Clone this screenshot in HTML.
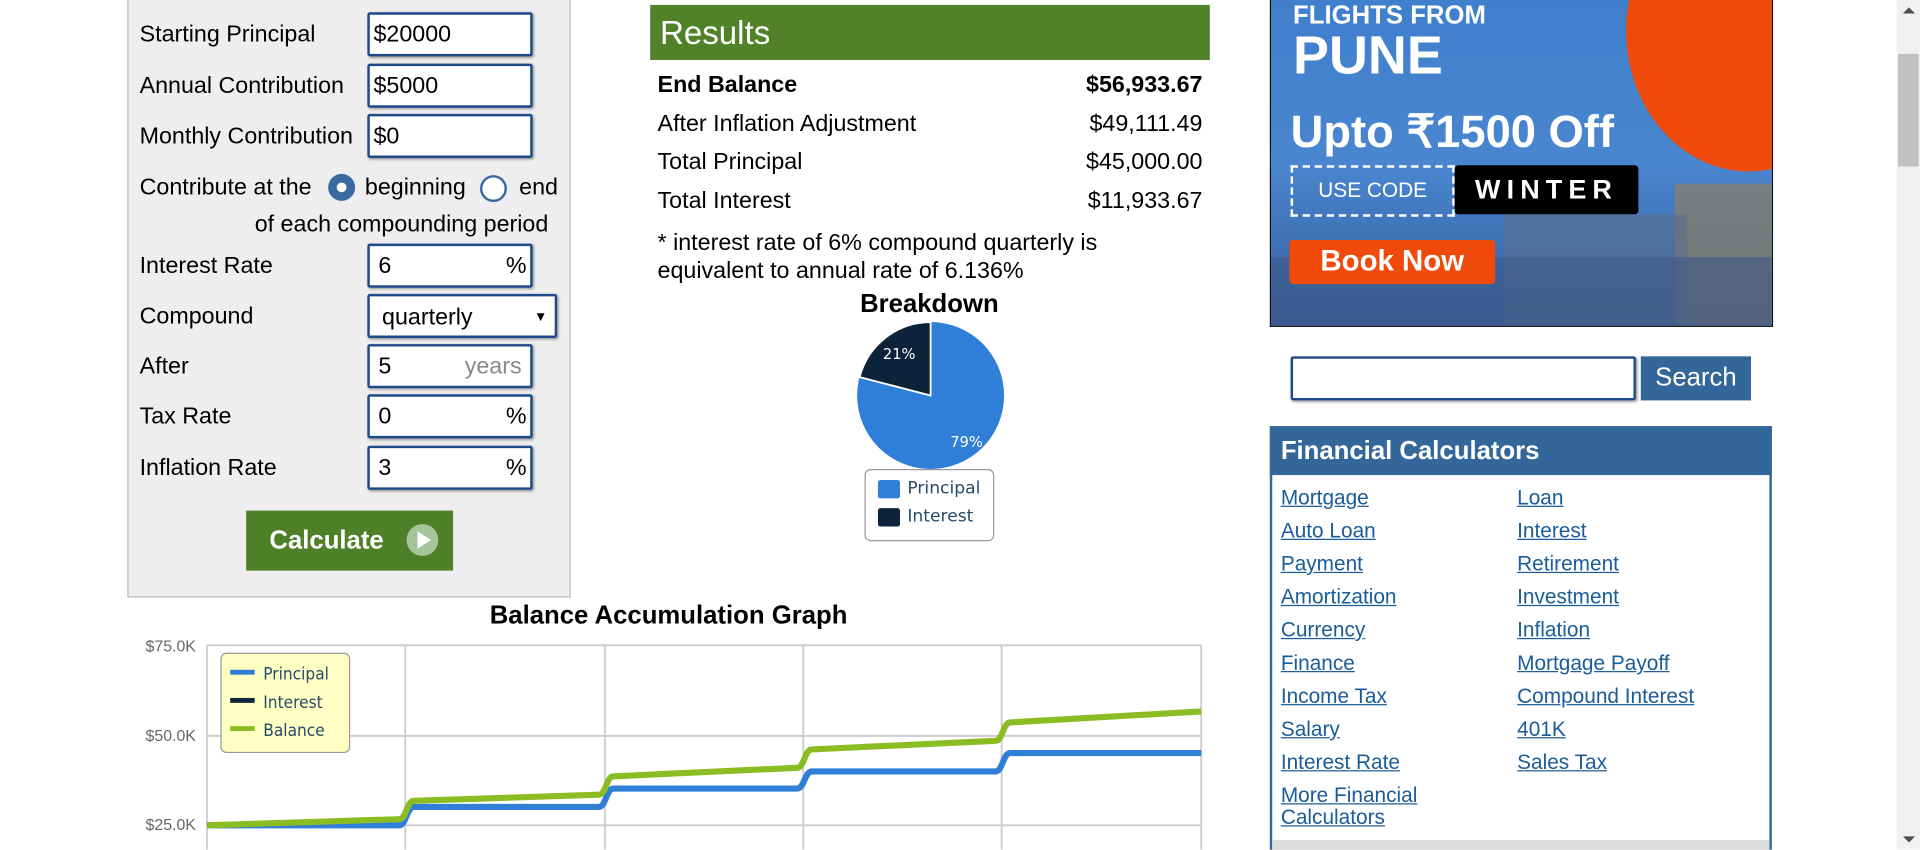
<!DOCTYPE html>
<html><head><meta charset="utf-8"><style>
html,body{margin:0;padding:0;width:1920px;height:849px;overflow:hidden;background:#fff}
#w{position:absolute;left:0;top:0;width:1568px;height:694px;overflow:hidden;transform:scale(1.22449);transform-origin:0 0;font-family:"Liberation Sans",Arial,sans-serif;color:#000}
.a{position:absolute}
.lbl{position:absolute;left:114px;font-size:19px;line-height:20px;margin-top:1px}
.in{position:absolute;left:300px;width:131px;height:32px;border:2px solid #1e4a8a;border-radius:2px;background:#fff;box-shadow:1px 1px 2px #999;font-size:19px;line-height:34px;box-sizing:content-box}
.in span{position:absolute;left:3px}
.in i{position:absolute;right:3px;font-style:normal}
.row{position:absolute;left:537px;width:445px;font-size:19px;line-height:20px;margin-top:1px}
.row b,.row span.v{position:absolute;right:0}
.lk{position:absolute;font-size:17px;color:#1a5c99;text-decoration:underline;line-height:18px}
</style></head><body><div id="w">
<div class="a" style="left:104px;top:-2px;width:360px;height:488px;background:#eee;border:1px solid #bbb"></div>
<div class="lbl" style="top:18px">Starting Principal</div>
<div class="in" style="top:10px"><span>$20000</span></div>
<div class="lbl" style="top:60px">Annual Contribution</div>
<div class="in" style="top:52px"><span>$5000</span></div>
<div class="lbl" style="top:101px">Monthly Contribution</div>
<div class="in" style="top:93px"><span>$0</span></div>
<div class="lbl" style="top:143px">Contribute at the</div>
<div class="a" style="left:268px;top:142px;width:8px;height:8px;border:7px solid #3a6aa0;border-radius:50%;background:#fff"></div>
<div class="lbl" style="left:298px;top:143px">beginning</div>
<div class="a" style="left:392px;top:143px;width:18px;height:18px;border:2px solid #3a6aa0;border-radius:50%;background:#fff"></div>
<div class="lbl" style="left:424px;top:143px">end</div>
<div class="lbl" style="left:208px;top:173px">of each compounding period</div>
<div class="lbl" style="top:207px">Interest Rate</div>
<div class="in" style="top:199px"><span style="left:7px">6</span><i>%</i></div>
<div class="lbl" style="top:248px">Compound</div>
<div class="in" style="top:240px;width:151px"><span style="left:10px;top:1px">quarterly</span><i style="font-size:11px;right:6px">▼</i></div>
<div class="lbl" style="top:289px">After</div>
<div class="in" style="top:281px"><span style="left:7px">5</span><i style="right:7px;color:#888">years</i></div>
<div class="lbl" style="top:330px">Tax Rate</div>
<div class="in" style="top:322px"><span style="left:7px">0</span><i>%</i></div>
<div class="lbl" style="top:372px">Inflation Rate</div>
<div class="in" style="top:364px"><span style="left:7px">3</span><i>%</i></div>
<div class="a" style="left:201px;top:417px;width:169px;height:49px;background:#4e8127"></div>
<div class="a" style="left:220px;top:430px;font-size:21px;font-weight:bold;color:#fff">Calculate</div>
<div class="a" style="left:332px;top:428px;width:26px;height:26px;border-radius:50%;background:#a8c49a"></div>
<div class="a" style="left:341px;top:434px;width:0;height:0;border-left:11px solid #fff;border-top:7px solid transparent;border-bottom:7px solid transparent"></div>
<div class="a" style="left:531px;top:4px;width:457px;height:45px;background:#51822a"></div>
<div class="a" style="left:539px;top:12px;font-size:27px;color:#fff;line-height:30px">Results</div>
<div class="row" style="top:59px;font-weight:bold">End Balance<b>$56,933.67</b></div>
<div class="row" style="top:91px">After Inflation Adjustment<span class="v">$49,111.49</span></div>
<div class="row" style="top:122px">Total Principal<span class="v">$45,000.00</span></div>
<div class="row" style="top:154px">Total Interest<span class="v">$11,933.67</span></div>
<div class="row" style="top:186px;line-height:23px">* interest rate of 6% compound quarterly is<br>equivalent to annual rate of 6.136%</div>
<div class="a" style="left:659px;top:237px;width:200px;text-align:center;font-size:21px;font-weight:bold">Breakdown</div>
<svg class="a" style="left:698px;top:262px" width="124" height="124" viewBox="0 0 124 124">
<circle cx="62" cy="61" r="60" fill="#2f7ed8"/>
<path d="M62 61 L62 1 A60 60 0 0 0 4 46 Z" fill="#0d233a" stroke="#fff" stroke-width="1.5"/>
<text x="23" y="31" font-family="DejaVu Sans" font-size="12" fill="#fff">21%</text>
<text x="78" y="103" font-family="DejaVu Sans" font-size="12" fill="#fff">79%</text>
</svg>
<div class="a" style="left:706px;top:383px;width:104px;height:57px;border:1px solid #999;border-radius:5px;background:#fff"></div>
<div class="a" style="left:717px;top:392px;width:18px;height:15px;background:#2f7ed8;border-radius:2px"></div>
<div class="a" style="left:717px;top:415px;width:18px;height:15px;background:#0d233a;border-radius:2px"></div>
<div class="a" style="left:741px;top:391px;font-family:'DejaVu Sans';font-size:14px;color:#274b6d">Principal</div>
<div class="a" style="left:741px;top:414px;font-family:'DejaVu Sans';font-size:14px;color:#274b6d">Interest</div>
<div class="a" style="left:346px;top:491px;width:400px;text-align:center;font-size:21px;font-weight:bold">Balance Accumulation Graph</div>
<svg class="a" style="left:100px;top:515px" width="890" height="180" viewBox="0 0 890 180">
<g stroke="#ccc" stroke-width="1.5" fill="none">
<line x1="69" y1="12" x2="881" y2="12"/><line x1="69" y1="86" x2="881" y2="86"/><line x1="69" y1="159" x2="881" y2="159"/>
<line x1="69" y1="12" x2="69" y2="180"/><line x1="231" y1="12" x2="231" y2="180"/><line x1="394" y1="12" x2="394" y2="180"/><line x1="556" y1="12" x2="556" y2="180"/><line x1="718" y1="12" x2="718" y2="180"/><line x1="881" y1="12" x2="881" y2="180"/>
</g>
<g font-family="Liberation Sans Narrow,Liberation Sans" font-size="13" fill="#666" text-anchor="end">
<text x="60" y="17">$75.0K</text><text x="60" y="90">$50.0K</text><text x="60" y="163">$25.0K</text></g>
<path d="M69 159 L226 159 C232 159 232 144 238 144 L389 144 C395 144 395 129 401 129 L551 129 C557 129 557 115 563 115 L713 115 C719 115 719 100 725 100 L881 100" stroke="#2f7ed8" stroke-width="5" fill="none"/>
<path d="M69 159 L226 154 C232 154 232 139 238 139 L389 134 C395 134 395 119 401 119 L551 112 C557 112 557 97 563 97 L713 90 C719 90 719 75 725 75 L881 66" stroke="#8bbc21" stroke-width="5" fill="none"/>
</svg>
<div class="a" style="left:180px;top:533px;width:104px;height:80px;background:#ffffc4;border:1px solid #999;border-radius:5px"></div>
<div class="a" style="left:188px;top:547px;width:20px;height:4px;background:#2f7ed8"></div>
<div class="a" style="left:188px;top:570px;width:20px;height:4px;background:#0d233a"></div>
<div class="a" style="left:188px;top:593px;width:20px;height:4px;background:#8bbc21"></div>
<div class="a" style="left:215px;top:540px;font-family:'DejaVu Sans Condensed','DejaVu Sans';font-size:14px;color:#274b6d;line-height:23px">Principal<br>Interest<br>Balance</div>
<div class="a" style="left:1037px;top:0;width:409px;height:266px;background:linear-gradient(180deg,#3f7fcc 0%,#4a86cf 50%,#3c6db0 80%,#34599a 100%);border:1px solid #111;border-top:none;overflow:hidden">
<div class="a" style="left:290px;top:-90px;width:200px;height:230px;border-radius:50%;background:#f04a0a"></div>
<div class="a" style="left:330px;top:150px;width:80px;height:115px;background:#8e7e62;opacity:.7"></div>
<div class="a" style="left:190px;top:175px;width:150px;height:90px;background:#5d6f8e;opacity:.6"></div>
<div class="a" style="left:0;top:210px;width:410px;height:56px;background:#3e5a88;opacity:.6"></div>
<div class="a" style="left:18px;top:1px;font-size:21px;font-weight:bold;color:#fff;line-height:24px">FLIGHTS FROM</div>
<div class="a" style="left:18px;top:22px;font-size:44px;font-weight:bold;color:#fff;line-height:48px">PUNE</div>
<div class="a" style="left:16px;top:86px;font-size:37px;font-weight:bold;color:#fff;line-height:44px">Upto ₹1500 Off</div>
<div class="a" style="left:16px;top:135px;width:130px;height:38px;border:2px dashed #fff;color:#fff;font-size:17px;line-height:38px;text-align:center">USE CODE</div>
<div class="a" style="left:150px;top:135px;width:150px;height:40px;background:#000;border-radius:3px;color:#fff;font-size:22px;font-weight:bold;letter-spacing:5px;line-height:40px;text-align:center">WINTER</div>
<div class="a" style="left:15px;top:196px;width:168px;height:36px;background:#f04a0a;border-radius:3px;color:#fff;font-size:24px;font-weight:bold;line-height:36px;text-align:center">Book Now</div>
</div>
<div class="a" style="left:1054px;top:291px;width:278px;height:32px;border:2px solid #1e4a8a;border-radius:2px;box-shadow:1px 1px 2px #999"></div>
<div class="a" style="left:1340px;top:291px;width:90px;height:36px;background:#336699;color:#fff;font-size:21px;line-height:36px;text-align:center">Search</div>
<div class="a" style="left:1037px;top:348px;width:406px;height:360px;border:2px solid #336699;background:#fff"></div>
<div class="a" style="left:1037px;top:348px;width:410px;height:40px;background:#336699"></div>
<div class="a" style="left:1046px;top:357px;font-size:21px;font-weight:bold;color:#fff">Financial Calculators</div>
<div class="a" style="left:1039px;top:686px;width:406px;height:10px;background:#ddd"></div>
<div class="lk" style="left:1046px;top:398px">Mortgage</div><div class="lk" style="left:1239px;top:398px">Loan</div>
<div class="lk" style="left:1046px;top:425px">Auto Loan</div><div class="lk" style="left:1239px;top:425px">Interest</div>
<div class="lk" style="left:1046px;top:452px">Payment</div><div class="lk" style="left:1239px;top:452px">Retirement</div>
<div class="lk" style="left:1046px;top:479px">Amortization</div><div class="lk" style="left:1239px;top:479px">Investment</div>
<div class="lk" style="left:1046px;top:506px">Currency</div><div class="lk" style="left:1239px;top:506px">Inflation</div>
<div class="lk" style="left:1046px;top:533px">Finance</div><div class="lk" style="left:1239px;top:533px">Mortgage Payoff</div>
<div class="lk" style="left:1046px;top:560px">Income Tax</div><div class="lk" style="left:1239px;top:560px">Compound Interest</div>
<div class="lk" style="left:1046px;top:587px">Salary</div><div class="lk" style="left:1239px;top:587px">401K</div>
<div class="lk" style="left:1046px;top:614px">Interest Rate</div><div class="lk" style="left:1239px;top:614px">Sales Tax</div>
<div class="lk" style="left:1046px;top:641px">More Financial<br>Calculators</div>
<div class="a" style="left:1549px;top:0;width:19px;height:694px;background:#f1f1f1"></div>
<div class="a" style="left:1550px;top:44px;width:17px;height:92px;background:#c1c1c1"></div>
<div class="a" style="left:1554px;top:6px;width:0;height:0;border-left:5px solid transparent;border-right:5px solid transparent;border-bottom:5px solid #505050"></div>
<div class="a" style="left:1554px;top:683px;width:0;height:0;border-left:5px solid transparent;border-right:5px solid transparent;border-top:5px solid #505050"></div>
</div></body></html>
